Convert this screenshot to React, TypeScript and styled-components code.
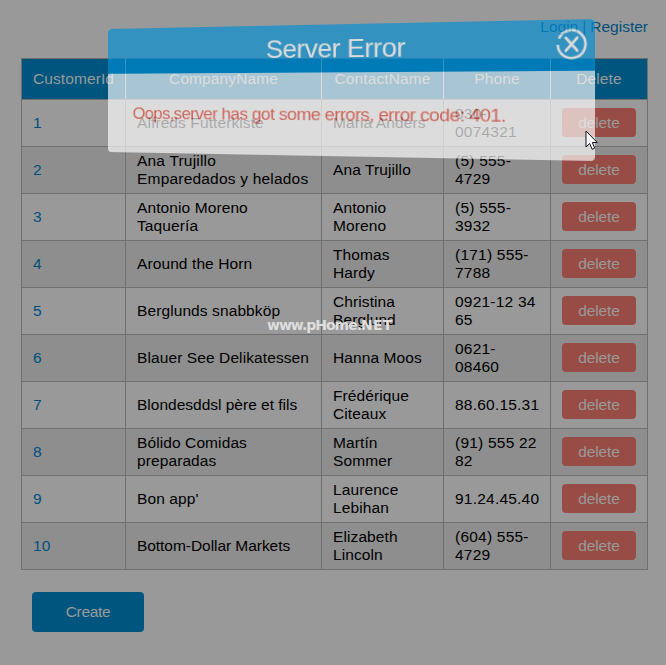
import React from "react";
import styled, { createGlobalStyle } from "styled-components";

const GlobalStyle = createGlobalStyle`
  * { box-sizing: border-box; }
  body {
    margin: 0;
    background: #999999;
    font-family: "Liberation Sans", Arial, sans-serif;
    font-size: 15.5px;
    line-height: 18px;
    letter-spacing: 0.1px;
    color: #000;
  }
`;

const Page = styled.div`
  position: relative;
  width: 666px;
  height: 665px;
  overflow: hidden;
  padding: 18px 18px 0 21px;
`;

const AccountLinks = styled.nav`
  display: flex;
  justify-content: flex-end;
  gap: 4px;
  height: 40px;
  letter-spacing: 0;
  color: #00507f;
`;

const CustomerTable = styled.table`
  width: 627px;
  table-layout: fixed;
  border-collapse: collapse;
`;

const Column = styled.col<{ $width: number }>`
  width: ${(p) => p.$width}px;
`;

const HeaderCell = styled.th`
  height: 41px;
  padding: 0;
  border: 1px solid #6f6f6f;
  border-left-color: #999;
  border-right-color: #999;
  background: #00557f;
  color: #999999;
  font-weight: 400;
  text-align: center;
  white-space: nowrap;
  &:first-child { border-left-color: #6f6f6f; }
  &:last-child { border-right-color: #6f6f6f; }
`;

const Row = styled.tr`
  height: 47px;
  &:nth-child(even) { background: #8e8e8e; }
`;

const Cell = styled.td<{ $link?: boolean; $tracking?: number }>`
  padding: 0 0 0 11px;
  border: 1px solid #6f6f6f;
  vertical-align: middle;
  white-space: pre;
  letter-spacing: ${(p) => p.$tracking ?? 0.1}px;
  color: ${(p) => (p.$link ? "#00507f" : "#000")};
`;

const DeleteButton = styled.button`
  display: block;
  width: 74px;
  height: 29px;
  margin: 0 0 2px;
  padding: 0;
  border: 0;
  border-radius: 4px;
  background: #974d45;
  color: #999999;
  font: 15.5px/29px "Liberation Sans", Arial, sans-serif;
  letter-spacing: -0.1px;
`;

const CreateButton = styled.button`
  display: block;
  width: 112px;
  height: 40px;
  margin: 22px 0 0 11px;
  padding: 0;
  border: 0;
  border-radius: 4px;
  background: #00557f;
  color: #999999;
  font: 15.5px/40px "Liberation Sans", Arial, sans-serif;
  letter-spacing: -0.3px;
`;

const Dialog = styled.section`
  position: absolute;
  left: 108px;
  top: 29px;
  width: 500px;
  height: 140px;
  border-radius: 4px;
  overflow: hidden;
  background: #fff;
  opacity: 0.66;
  letter-spacing: 0;
  transform-origin: 0 0;
  transform: matrix3d(0.8437, -0.01732, 0, -0.0002676, 0, 0.8786, 0, 0, 0, 0, 1, 0, 0, 0, 0, 1);
`;

const DialogHeader = styled.header`
  display: grid;
  grid-template-columns: 40px 1fr 40px;
  align-items: center;
  height: 51px;
  background: #008fd5;
  color: #fff;
`;

const DialogTitle = styled.h2`
  grid-column: 2;
  margin: 0;
  font-size: 27.5px;
  font-weight: 400;
  line-height: 48px;
  text-align: center;
  letter-spacing: -0.5px;
`;

const CloseIcon = styled.svg`
  width: 28px;
  height: 31px;
  margin-left: 5px;
  margin-bottom: 2px;
`;

const DialogMessage = styled.p`
  margin: 0;
  padding: 33px 0 0 29px;
  font-size: 19px;
  line-height: 24px;
  letter-spacing: -0.67px;
  color: #e74c3c;
  white-space: nowrap;
`;

const Watermark = styled.div`
  position: absolute;
  left: 267px;
  top: 316px;
  color: #dedede;
  font: bold 14px/18px "DejaVu Sans", sans-serif;
  letter-spacing: -1px;
  white-space: nowrap;
`;

const WatermarkSuffix = styled.span`
  letter-spacing: 0.3px;
`;

const Pointer = styled.svg`
  position: absolute;
  left: 585px;
  top: 130px;
`;

const columns: [string, number][] = [
  ["CustomerId", 104],
  ["CompanyName", 196],
  ["ContactName", 122],
  ["Phone", 107],
  ["Delete", 97],
];

type Customer = { company: string; contact: string; phone: string; tracking?: number };

const customers: Customer[] = [
  { company: "Alfreds Futterkiste", contact: "Maria Anders", phone: "030-\n0074321" },
  { company: "Ana Trujillo\nEmparedados y helados", contact: "Ana Trujillo", phone: "(5) 555-\n4729", tracking: 0.2 },
  { company: "Antonio Moreno\nTaquería", contact: "Antonio\nMoreno", phone: "(5) 555-\n3932" },
  { company: "Around the Horn", contact: "Thomas\nHardy", phone: "(171) 555-\n7788" },
  { company: "Berglunds snabbköp", contact: "Christina\nBerglund", phone: "0921-12 34\n65" },
  { company: "Blauer See Delikatessen", contact: "Hanna Moos", phone: "0621-\n08460" },
  { company: "Blondesddsl père et fils", contact: "Frédérique\nCiteaux", phone: "88.60.15.31", tracking: 0 },
  { company: "Bólido Comidas\npreparadas", contact: "Martín\nSommer", phone: "(91) 555 22\n82" },
  { company: "Bon app'", contact: "Laurence\nLebihan", phone: "91.24.45.40" },
  { company: "Bottom-Dollar Markets", contact: "Elizabeth\nLincoln", phone: "(604) 555-\n4729", tracking: -0.05 },
];

export default function App() {
  return (
    <Page>
      <GlobalStyle />
      <AccountLinks>
        <span>Login</span>
        <span>|</span>
        <span>Register</span>
      </AccountLinks>
      <CustomerTable>
        <colgroup>
          {columns.map(([name, width]) => (
            <Column key={name} $width={width} />
          ))}
        </colgroup>
        <thead>
          <tr>
            {columns.map(([name]) => (
              <HeaderCell key={name}>{name}</HeaderCell>
            ))}
          </tr>
        </thead>
        <tbody>
          {customers.map(({ company, contact, phone, tracking }, i) => (
            <Row key={company}>
              <Cell $link>{i + 1}</Cell>
              <Cell $tracking={tracking}>{company}</Cell>
              <Cell>{contact}</Cell>
              <Cell $tracking={0.22}>{phone}</Cell>
              <Cell>
                <DeleteButton>delete</DeleteButton>
              </Cell>
            </Row>
          ))}
        </tbody>
      </CustomerTable>
      <CreateButton>Create</CreateButton>
      <Dialog>
        <DialogHeader>
          <DialogTitle>Server Error</DialogTitle>
          <CloseIcon viewBox="0 0 30 30" preserveAspectRatio="none" fill="none" stroke="#fff">
            <path d="M1.6 15.5A13.4 13.4 0 1 0 2.8 9.4" strokeWidth="2.4" />
            <path d="M9.5 8.8L20.5 21.2M20.5 8.8L9.5 21.2" strokeWidth="2.6" strokeLinecap="round" />
          </CloseIcon>
        </DialogHeader>
        <DialogMessage>Oops,server has got some errors, error code: 401.</DialogMessage>
      </Dialog>
      <Watermark>
        www.pHome.<WatermarkSuffix>NET</WatermarkSuffix>
      </Watermark>
      <Pointer width="13" height="21" viewBox="0 0 13 21">
        <path d="M1 1V17L4.7 13.5L7.2 19.3L9.7 18.2L7.3 12.5H12.2Z" fill="#fff" stroke="#101020" />
      </Pointer>
    </Page>
  );
}
